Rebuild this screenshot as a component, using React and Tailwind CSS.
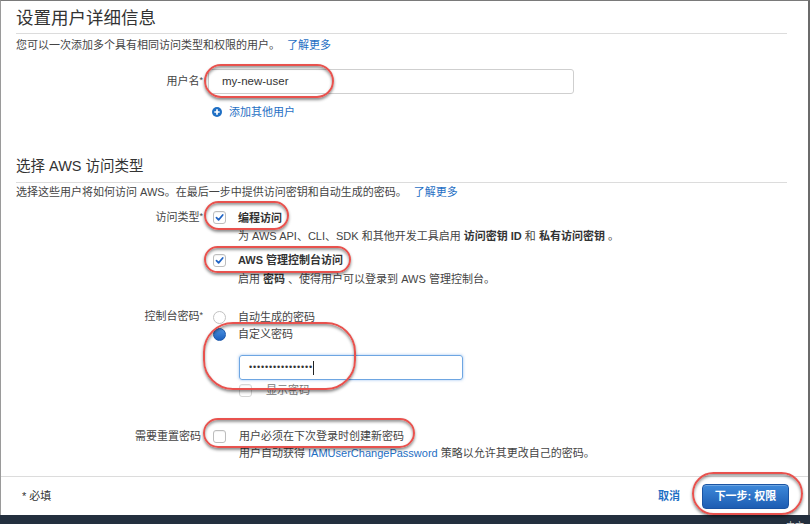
import React from "react";

const FONT = { fontFamily: '"Liberation Sans", "Noto Sans CJK SC", sans-serif' };

function Check({ checked = false, disabled = false }) {
  return (
    <span
      className={
        "flex h-[13px] w-[13px] shrink-0 items-center justify-center rounded-[3px] border bg-white shadow-[inset_0_1px_1px_rgba(0,0,0,0.06)] " +
        (disabled ? "border-[#d6d6d6]" : "border-[#bdbdbd]")
      }
    >
      {checked && (
        <svg width="9" height="9" viewBox="0 0 10 10">
          <path d="M1.6 5.2 L4 7.6 L8.6 2.2" fill="none" stroke="#1f63c4" strokeWidth="1.9" strokeLinecap="round" strokeLinejoin="round" />
        </svg>
      )}
    </span>
  );
}

function Radio({ selected = false }) {
  return selected ? (
    <span className="block h-[13px] w-[13px] shrink-0 rounded-full border border-[#1c58ab] bg-linear-to-b from-[#4a92e2] to-[#1c5fbd]" />
  ) : (
    <span className="block h-[13px] w-[13px] shrink-0 rounded-full border border-[#c2c2c2] bg-white" />
  );
}

function Star() {
  return <span className="relative -top-[2px] text-[9px]">*</span>;
}

function Mark({ left, top, w, h, r = "rounded-full" }) {
  return (
    <div
      className={"pointer-events-none absolute border-2 border-[#e8524e] " + r + " shadow-[0_2px_3px_rgba(0,0,0,0.45),inset_0_2px_3px_rgba(0,0,0,0.4)]"}
      style={{ left, top, width: w, height: h }}
    />
  );
}

export default function App() {
  return (
    <div className="relative flex h-[524px] w-[810px] flex-col overflow-hidden bg-white text-[11px] text-[#444]" style={FONT}>
      <div className="flex min-h-0 flex-1 flex-col border-t border-l border-r-2 border-t-[#7a7a7a] border-l-[#9a9a9a] border-r-[#6b6b6b]">
        <div className="flex flex-1 flex-col pl-[15px] pr-[21px]">
          <h1 className="mt-[5px] text-[17.5px] leading-[24px] font-normal text-[#333]">设置用户详细信息</h1>
          <div className="mt-[3px] h-px bg-[#dcdcdc]" />
          <p className="mt-[3px] leading-[16px]">
            您可以一次添加多个具有相同访问类型和权限的用户。 <span className="ml-[4px] text-[#1f6fc4]">了解更多</span>
          </p>

          <div className="mt-[16px] flex items-center">
            <div className="w-[187px] text-right leading-[16px]">
              用户名<Star />
            </div>
            <div className="ml-[5px] flex h-[25px] w-[366px] items-center rounded-[3px] border border-[#cfcfcf] pl-[13px] text-[11.5px] text-[#333]">
              my-new-user
            </div>
          </div>

          <div className="mt-[10px] flex items-center pl-[196px] leading-[16px] text-[#1f6fc4]">
            <svg width="10" height="10" viewBox="0 0 10 10">
              <circle cx="5" cy="5" r="5" fill="#1f6fc4" />
              <path d="M5 2.3 V7.7 M2.3 5 H7.7" stroke="#fff" strokeWidth="1.7" />
            </svg>
            <span className="ml-[7px]">添加其他用户</span>
          </div>

          <h2 className="mt-[34px] text-[14.5px] leading-[24px] font-normal text-[#333]">选择 AWS 访问类型</h2>
          <div className="mt-[4px] h-px bg-[#dcdcdc]" />
          <p className="mt-[1px] leading-[16px]">
            选择这些用户将如何访问 AWS。在最后一步中提供访问密钥和自动生成的密码。 <span className="ml-[4px] text-[#1f6fc4]">了解更多</span>
          </p>

          <div className="mt-[8px] flex items-center leading-[18px]">
            <div className="w-[187px] text-right">
              访问类型<Star />
            </div>
            <span className="ml-[10px]"><Check checked /></span>
            <span className="ml-[12px] font-bold text-[#333]">编程访问</span>
          </div>
          <p className="pl-[222px] leading-[18px]">
            为 AWS API、CLI、SDK 和其他开发工具启用 <b className="text-[#333]">访问密钥 ID</b> 和 <b className="text-[#333]">私有访问密钥</b> 。
          </p>
          <div className="mt-[6px] flex items-center leading-[18px]">
            <div className="w-[187px]" />
            <span className="ml-[10px]"><Check checked /></span>
            <span className="ml-[12px] font-bold text-[#333]">AWS 管理控制台访问</span>
          </div>
          <p className="mt-[1px] pl-[222px] leading-[18px]">
            启用 <b className="text-[#333]">密码</b> 、使得用户可以登录到 AWS 管理控制台。
          </p>

          <div className="mt-[20px] flex items-center leading-[17px]">
            <div className="w-[187px] text-right">
              控制台密码<Star />
            </div>
            <span className="ml-[10px]"><Radio /></span>
            <span className="ml-[12px]">自动生成的密码</span>
          </div>
          <div className="flex items-center leading-[17px]">
            <div className="w-[187px]" />
            <span className="ml-[10px]"><Radio selected /></span>
            <span className="ml-[12px]">自定义密码</span>
          </div>
          <div className="ml-[223px] mt-[12px] flex h-[25px] w-[224px] items-center rounded-[3px] border border-[#6ea6e2] pl-[9px] shadow-[0_0_3px_rgba(70,140,225,0.55)]">
            <span className="text-[9px] leading-none tracking-[0.85px] text-[#333]">••••••••••••••••</span>
            <span className="h-[14px] w-px bg-[#222]" />
          </div>
          <div className="mt-[1px] flex items-center pl-[223px] leading-[18px]">
            <Check disabled />
            <span className="ml-[14px] text-[#777]">显示密码</span>
          </div>

          <div className="mt-[28px] flex items-center leading-[18px]">
            <div className="w-[185px] text-right">需要重置密码</div>
            <span className="ml-[12px]"><Check /></span>
            <span className="ml-[13px]">用户必须在下次登录时创建新密码</span>
          </div>
          <p className="pl-[223px] leading-[16px]">
            用户自动获得 <span className="text-[#1f6fc4]">IAMUserChangePassword</span> 策略以允许其更改自己的密码。
          </p>
        </div>

        <div className="flex h-[39px] shrink-0 items-center border-t border-[#dcdcdc] pl-[21px] pr-[19px]">
          <span className="text-[#333]">* 必填</span>
          <div className="flex-1" />
          <span className="font-bold text-[#1f6fc4]">取消</span>
          <button className="ml-[22px] flex h-[25px] w-[87px] items-center justify-center rounded-[4px] border border-[#1a54a3] bg-linear-to-b from-[#3e89da] to-[#1d5db3] text-[11px] font-bold text-white shadow-[inset_0_1px_0_rgba(255,255,255,0.25)]">
            下一步: 权限
          </button>
        </div>
      </div>
      <div className="flex h-[9px] shrink-0 justify-end overflow-hidden bg-[#232f3e] pr-[6px]">
        <span className="pt-[6px] text-[9px] leading-[10px] text-[#d5d5d5]">中文</span>
      </div>

      <Mark left={204} top={64} w={130} h={34} />
      <Mark left={204} top={201} w={85} h={29} />
      <Mark left={204} top={246} w={147} h={27} />
      <Mark left={203} top={322} w={153} h={68} r="rounded-[30px]" />
      <Mark left={203} top={418} w={212} h={30} />
      <Mark left={692} top={472} w={111} h={43} />
    </div>
  );
}
